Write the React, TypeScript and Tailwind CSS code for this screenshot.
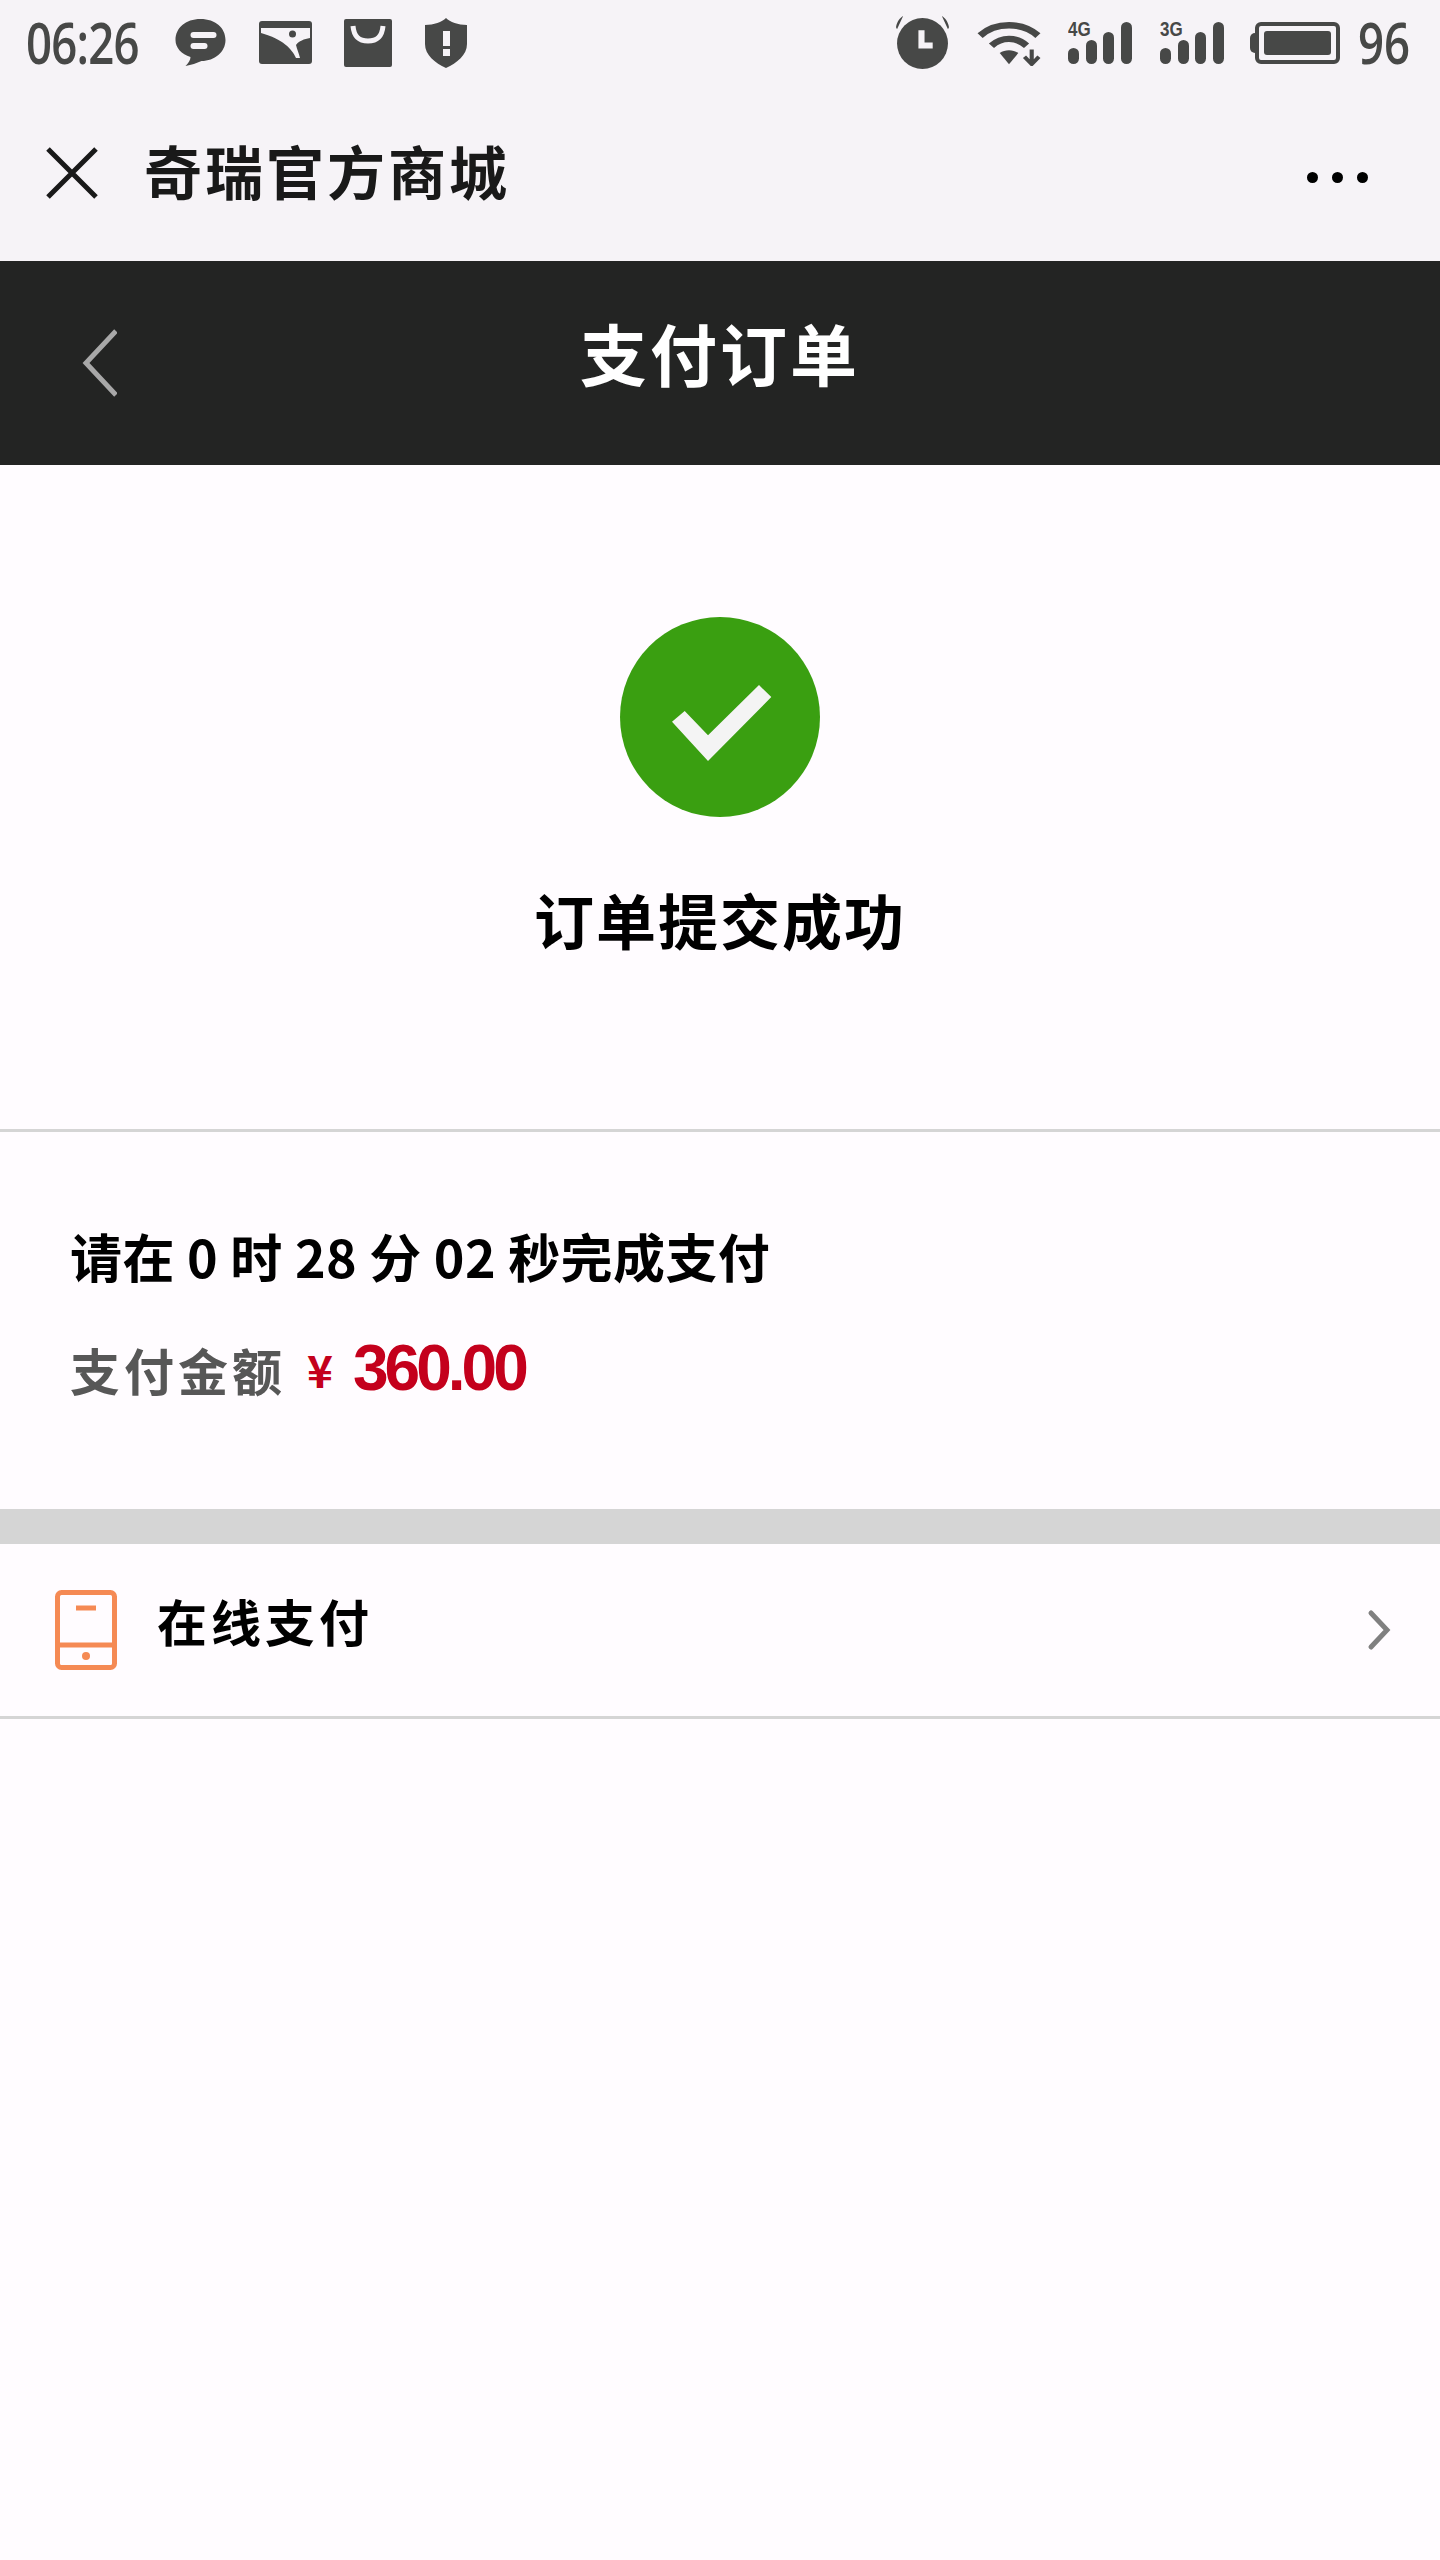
const cjk = "font-['Noto_Sans_CJK_SC','Liberation_Sans',sans-serif]";

function StatusLeftIcons() {
  return (
    <div className="flex items-center gap-[32px] ml-[28px] text-[#474847]">
      <svg width="53" height="50" viewBox="0 0 52 50" className="fill-[#474847]">
        <path d="M26 1C41 1 51 10 51 22C51 34 40 43 27 43C22 45 17 47 11 48C14 45 16 42 16 39C7 36 1 30 1 22C1 10 11 1 26 1Z" />
        <rect x="16" y="14" width="26" height="6" rx="3" fill="#f6f3f7" />
        <rect x="16" y="25" width="17" height="6" rx="3" fill="#f6f3f7" />
      </svg>
      <svg width="53" height="43" viewBox="0 0 53 43" className="fill-[#474847]">
        <rect x="0" y="0" width="53" height="43" rx="3" />
        <path d="M2 7H51V17C45 18 40 20 37 24C38 28 40 33 41 37H37C33 28 24 18 2 12Z" fill="#f6f3f7" />
        <circle cx="33.5" cy="13" r="3.5" fill="#474847" />
      </svg>
      <svg width="48" height="48" viewBox="0 0 48 48" className="fill-[#474847]">
        <rect x="0" y="0" width="48" height="48" rx="2" />
        <path d="M9 7C10 18 15 22 24 22C33 22 38 18 39 7" fill="none" stroke="#f6f3f7" strokeWidth="5" />
      </svg>
      <svg width="44" height="52" viewBox="0 0 44 52" className="fill-[#474847]">
        <path d="M22 1C26 5 34 8 43 8L43 27C43 38 33 46 22 51C11 46 1 38 1 27L1 8C10 8 18 5 22 1Z" />
        <rect x="19" y="14" width="7" height="15" fill="#f6f3f7" />
        <rect x="19" y="32" width="7" height="7" fill="#f6f3f7" />
      </svg>
    </div>
  );
}

function SignalIcon({ label }: { label: string }) {
  return (
    <div className="relative w-[64px] h-[42px] flex items-end gap-[6.5px]">
      <span className="absolute left-0 -top-[1px] text-[20px] leading-[16px] font-bold font-['Liberation_Sans',sans-serif] scale-x-[0.85] origin-left text-[#474847]">
        {label}
      </span>
      <div className="w-[11px] h-[16px] rounded-full bg-[#474847]" />
      <div className="w-[11px] h-[24px] rounded-full bg-[#474847]" />
      <div className="w-[11px] h-[32px] rounded-full bg-[#474847]" />
      <div className="w-[11px] h-[42px] rounded-full bg-[#474847]" />
    </div>
  );
}

function StatusBar() {
  return (
    <div className="h-[85px] flex items-center justify-between bg-[#f6f3f7]">
      <div className="flex items-center ml-[26px]">
        <span className="w-[120px] text-[57px] leading-none font-semibold font-['Open_Sans',sans-serif] text-[#474847] scale-x-[0.8] origin-left tracking-[-1px]">
          06:26
        </span>
        <StatusLeftIcons />
      </div>
      <div className="flex items-center mr-[29px]">
        <svg width="53" height="53" viewBox="2 1 52 52" className="fill-[#474847]">
          <ellipse cx="28" cy="28" rx="25" ry="25" />
          <path d="M2 12C3 6 6 3 9 1L3 14ZM54 12C53 6 50 3 47 1L53 14Z" />
          <path d="M24 15H30V27H38V33H24Z" fill="#f6f3f7" />
        </svg>
        <svg width="64" height="46" viewBox="0 0 62 50" preserveAspectRatio="none" className="ml-[28px] fill-none stroke-[#474847]">
          <path d="M3 17C18 2 44 2 59 17" strokeWidth="7" />
          <path d="M14 28C24 18 38 18 48 28" strokeWidth="7" />
          <path d="M22 36C27 32 35 32 40 36L31 48Z" className="fill-[#474847]" strokeWidth="0" />
          <path d="M53 32V47M46 40L53 48L60 40" strokeWidth="4" />
        </svg>
        <div className="ml-[27px]"><SignalIcon label="4G" /></div>
        <div className="ml-[28px]"><SignalIcon label="3G" /></div>
        <div className="ml-[26px] flex items-center">
          <div className="w-[5px] h-[20px] rounded-l-full bg-[#474847]" />
          <div className="w-[85px] h-[42px] rounded-[6px] border-[4px] border-[#474847] p-[5px]">
            <div className="h-full rounded-[3px] bg-[#474847]" />
          </div>
        </div>
        <span className="ml-[18px] w-[53px] text-[57px] leading-none font-semibold font-['Open_Sans',sans-serif] text-[#474847] scale-x-[0.8] origin-left">
          96
        </span>
      </div>
    </div>
  );
}

function TitleBar() {
  return (
    <div className="h-[176px] flex items-center bg-[#f6f3f7]">
      <svg width="52" height="52" viewBox="0 0 52 52" className="ml-[46px] stroke-[#191919] mb-[1px]">
        <path d="M2 2L50 50M50 2L2 50" strokeWidth="5" />
      </svg>
      <span className={`${cjk} ml-[46px] -mt-[6px] text-[58px] leading-none font-bold text-[#191919] tracking-[3px]`}>
        奇瑞官方商城
      </span>
      <div className="ml-auto mr-[72px] mt-[8px] flex gap-[14px]">
        <div className="w-[11px] h-[11px] rounded-full bg-black" />
        <div className="w-[11px] h-[11px] rounded-full bg-black" />
        <div className="w-[11px] h-[11px] rounded-full bg-black" />
      </div>
    </div>
  );
}

export default function App() {
  return (
    <div className="w-[1440px] h-[2560px] overflow-hidden bg-[#fffcff]">
      <StatusBar />
      <TitleBar />

      <div className="h-[204px] bg-[#232423] flex items-center relative">
        <svg width="40" height="70" viewBox="0 0 40 70" className="ml-[77px] stroke-[#a8a8a8] fill-none">
          <path d="M39 3L9 35L39 67" strokeWidth="5" />
        </svg>
        <span className={`${cjk} absolute left-0 right-0 text-center text-[67px] leading-none font-bold text-white tracking-[3px] -mt-[23px]`}>
          支付订单
        </span>
      </div>

      <div className="h-[667px] flex flex-col items-center border-b-[3px] border-[#d5d5d5] pt-[152px]">
        <div className="w-[200px] h-[200px] rounded-full bg-[#3a9f11] flex items-center justify-center">
          <svg width="100" height="76" viewBox="0 0 100 76" className="fill-[#f4f4f4] mt-[12px] ml-[4px]">
            <path d="M0 36.7L12.7 26L36 50.3L87 0L99.3 12L36 76Z" />
          </svg>
        </div>
        <div className={`${cjk} mt-[72px] text-[60px] leading-none font-bold text-black tracking-[2px]`}>
          订单提交成功
        </div>
      </div>

      <div className="h-[377px] pt-[98px] pl-[70px]">
        <div className={`${cjk} text-[52px] leading-none font-bold text-black whitespace-nowrap tracking-[0.4px]`}>
          请在 0 时 28 分 02 秒完成支付
        </div>
        <div className={`${cjk} mt-[56px] flex items-center`}>
          <span className="text-[50px] leading-none font-bold text-[#575757] tracking-[4px]">支付金额</span>
          <span className="ml-[21px] text-[44px] leading-none font-bold text-[#c4001c]">¥</span>
          <span className="ml-[20px] text-[64px] leading-none font-bold text-[#c4001c] tracking-[-4px] -mt-[2px] font-['Liberation_Sans',sans-serif]">
            360.00
          </span>
        </div>
      </div>

      <div className="h-[35px] bg-[#d5d5d5]" />

      <div className="h-[175px] flex items-center border-b-[3px] border-[#d5d5d5]">
        <svg width="62" height="80" viewBox="0 0 62 80" className="ml-[55px] fill-none stroke-[#f58a54]">
          <rect x="2.5" y="2.5" width="57" height="75" rx="4" strokeWidth="5" />
          <path d="M2 55H60" strokeWidth="5" />
          <path d="M21 18H41" strokeWidth="5" />
          <circle cx="31" cy="66" r="4" className="fill-[#f58a54]" strokeWidth="0" />
        </svg>
        <span className={`${cjk} ml-[40px] text-[50px] leading-none font-bold text-black tracking-[4px] -mt-[20px]`}>
          在线支付
        </span>
        <svg width="26" height="42" viewBox="0 0 26 42" className="ml-auto mr-[48px] stroke-[#808080] fill-none">
          <path d="M5 4L21 21L5 38" strokeWidth="5" strokeLinecap="round" />
        </svg>
      </div>
    </div>
  );
}
